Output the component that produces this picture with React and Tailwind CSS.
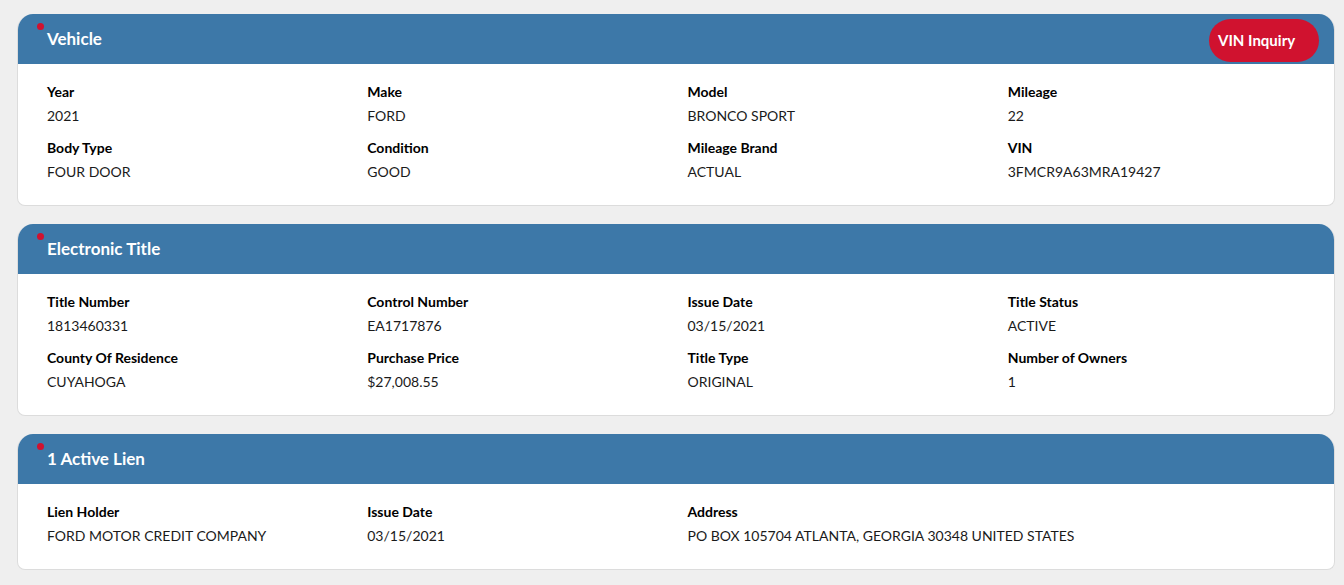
const Card = ({ title, action, rows }) => (
    <div className="bg-white border-x border-b border-[#dcdcdc] rounded-t-[16px] rounded-b-[8px] overflow-hidden">
        <div className="relative h-[50px] bg-[#3d78a8] flex items-center pl-[29px] pr-[15px]">
            <span className="absolute left-[19px] top-[9px] w-[7px] h-[7px] rounded-full bg-[#d0122f]"></span>
            <h2 className="text-white text-[17px] font-bold">{title}</h2>
            {action && <div className="ml-auto">{action}</div>}
        </div>
        <div className="pl-[29px] pr-[6px] pt-[18px] pb-[23px] flex flex-col gap-[12px]">
            {rows.map((row, i) => (
                <div key={i} className="grid grid-cols-4">
                    {row.map(([label, value], j) => (
                        <div key={label} className={row.length === 3 && j === 2 ? 'col-span-2' : ''}>
                            <div className="text-[14px] font-bold text-black leading-[20px]">{label}</div>
                            <div className="text-[14px] text-[#1a1a1a] leading-[20px] mt-[4px]">{value}</div>
                        </div>
                    ))}
                </div>
            ))}
        </div>
    </div>
);

export default function App() {
    return (
        <div className="min-h-screen bg-[#efefef] pt-[14px] pl-[17px] pr-[9px] pb-[14px] flex flex-col gap-[18px]" style={{ fontFamily: '"Lato", "Noto Sans", sans-serif' }}>
            <Card
                title="Vehicle"
                action={
                    <button className="mt-[2px] h-[43px] w-[110px] rounded-full bg-[#d0122f] text-white text-[15px] font-bold text-left pl-[9px]">VIN Inquiry</button>
                }
                rows={[
                    [['Year', '2021'], ['Make', 'FORD'], ['Model', 'BRONCO SPORT'], ['Mileage', '22']],
                    [['Body Type', 'FOUR DOOR'], ['Condition', 'GOOD'], ['Mileage Brand', 'ACTUAL'], ['VIN', '3FMCR9A63MRA19427']],
                ]}
            />
            <Card
                title="Electronic Title"
                rows={[
                    [['Title Number', '1813460331'], ['Control Number', 'EA1717876'], ['Issue Date', '03/15/2021'], ['Title Status', 'ACTIVE']],
                    [['County Of Residence', 'CUYAHOGA'], ['Purchase Price', '$27,008.55'], ['Title Type', 'ORIGINAL'], ['Number of Owners', '1']],
                ]}
            />
            <Card
                title="1 Active Lien"
                rows={[
                    [['Lien Holder', 'FORD MOTOR CREDIT COMPANY'], ['Issue Date', '03/15/2021'], ['Address', 'PO BOX 105704 ATLANTA, GEORGIA 30348 UNITED STATES']],
                ]}
            />
        </div>
    );
}
